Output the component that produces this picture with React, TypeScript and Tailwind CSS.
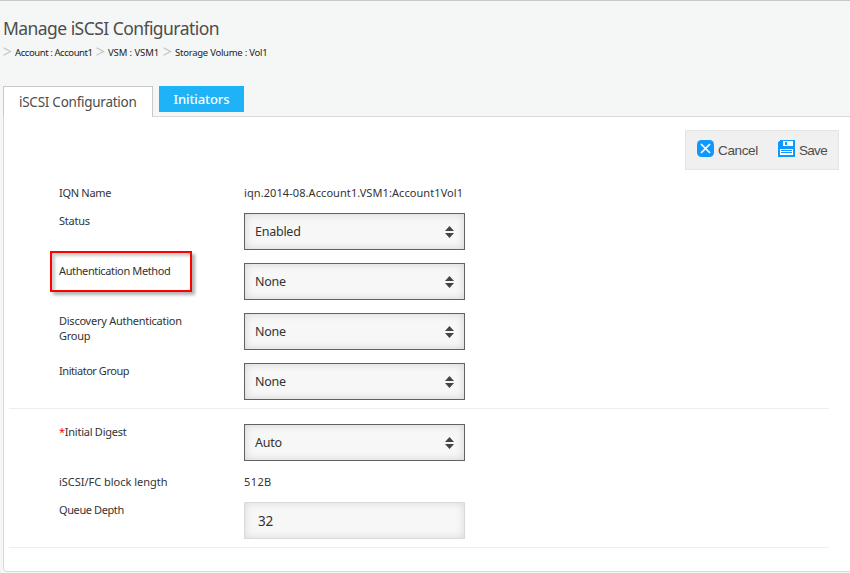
import React from "react";

function Chevron() {
  return (
    <svg width="9" height="9" viewBox="0 0 9 9" className="-mt-0.5 shrink-0" fill="none" stroke="#c4c4c4" strokeWidth="1.2">
      <path d="M0.5 0.7 L7.5 4.5 L0.5 8.3" />
    </svg>
  );
}

function Crumb({ children, className }: { children: React.ReactNode; className: string }) {
  return (
    <div className={`flex shrink-0 items-center ${className}`}>
      <Chevron />
      <span className="ml-[3px] whitespace-nowrap">{children}</span>
    </div>
  );
}

function SelectBox({ value }: { value: string }) {
  return (
    <div className="flex h-[37px] w-[221px] items-center justify-between border border-[#626163] bg-[#f7f7f7] pr-[10px] pl-[10px] text-[12.5px] tracking-[-0.25px] text-[#333] shadow-[inset_0_0_8px_rgba(0,0,0,0.15)]">
      <span>{value}</span>
      <svg width="9" height="12" viewBox="0 0 9 12" fill="#444">
        <path d="M4.5 0 L9 5 H0 Z M0 7 H9 L4.5 12 Z" />
      </svg>
    </div>
  );
}

function Row({ label, className, children }: { label: React.ReactNode; className: string; children: React.ReactNode }) {
  return (
    <div className={`flex items-start pl-[55px] ${className}`}>
      <div className="w-[185px] shrink-0 whitespace-nowrap">{label}</div>
      {children}
    </div>
  );
}

export default function App() {
  return (
    <div className="h-[573px] w-[850px] overflow-hidden border-t border-[#c9c9c9] bg-[#f5f7f6] font-['Noto_Sans',sans-serif] text-[#333]">
      <h1 className="mt-[15px] ml-[3px] h-6 text-[17.5px] leading-6 tracking-[-0.55px] whitespace-nowrap text-[#4d4d4d]">
        Manage iSCSI Configuration
      </h1>
      <nav className="mt-[5px] ml-[3px] flex h-[15px] items-center text-[9.5px] leading-[15px] tracking-[-0.25px] text-[#222]">
        <Crumb className="w-[93px] tracking-[-0.42px]">Account : Account1</Crumb>
        <Crumb className="w-[67px] tracking-[-0.1px]">VSM : VSM1</Crumb>
        <Crumb className="w-[110px]">Storage Volume : Vol1</Crumb>
      </nav>
      <div className="mt-[26px] flex h-[30px] items-start pl-[3px]">
        <div className="relative z-10 h-[31px] w-[150px] border border-b-0 border-[#c9c9c9] bg-white pl-[15px] text-[13.5px] leading-[30px] tracking-[-0.26px] whitespace-nowrap text-[#4d4d4d]">
          iSCSI Configuration
        </div>
        <div className="ml-[6px] h-[26px] w-[85px] bg-[#1eb3f6] text-center text-[13px] leading-[26px] font-medium tracking-[-0.1px] text-white">
          Initiators
        </div>
      </div>
      <main className="ml-[3px] h-[456px] w-[860px] rounded-bl-[4px] border border-[#d9d9d9] bg-white text-[11px] leading-[15px] tracking-[-0.25px]">
        <div className="mt-[13px] ml-[681px] flex h-10 w-[154px] items-start border border-[#e5e5e5] bg-[#f0f0f0] pl-[11px] font-['Liberation_Sans',Arial,sans-serif] text-[13.5px] leading-[40px] tracking-[-0.45px] text-[#4d4d4d]">
          <svg className="mt-[9px]" width="17" height="17" viewBox="0 0 17 17">
            <rect width="17" height="17" rx="4.5" fill="#0d99ff" />
            <path d="M4 4 L13 13 M13 4 L4 13" stroke="#fff" strokeWidth="1.7" />
          </svg>
          <span className="ml-1 w-[60px] tracking-[-0.35px]">Cancel</span>
          <svg className="mt-[9px]" width="17" height="17" viewBox="0 0 17 17" shapeRendering="crispEdges">
            <path d="M2 0 H17 V17 H0 V2 H1 V1 H2 Z" fill="#0d99ff" />
            <path d="M5 1 H15 V6 H5 Z M2 9 H15 V15 H2 Z" fill="#fff" />
            <path d="M7 2 H9 V5 H7 Z M3 10 H14 V11 H3 Z M3 12 H14 V13 H3 Z" fill="#0d99ff" />
          </svg>
          <span className="ml-1 tracking-[-0.7px]">Save</span>
        </div>

        <Row className="mt-[15px] h-7" label={<span className="tracking-[-0.3px]">IQN Name</span>}>
          <span className="tracking-[0.08px] whitespace-nowrap">iqn.2014-08.Account1.VSM1:Account1Vol1</span>
        </Row>
        <Row className="h-[50px]" label="Status">
          <SelectBox value="Enabled" />
        </Row>
        <div className="flex h-[50px] items-start pl-[46px]">
          <div className="-mt-3 mr-[52px] h-[41px] w-[142px] shrink-0 border-2 border-[#f00] pt-[10px] pl-[7px] tracking-[-0.38px] whitespace-nowrap shadow-[3px_3px_3px_rgba(0,0,0,0.3),inset_3px_3px_3px_rgba(0,0,0,0.2)]">
            Authentication Method
          </div>
          <SelectBox value="None" />
        </div>
        <Row className="h-[50px]" label={<>Discovery Authentication<br />Group</>}>
          <SelectBox value="None" />
        </Row>
        <Row className="h-[45px]" label={<span className="tracking-[-0.45px]">Initiator Group</span>}>
          <SelectBox value="None" />
        </Row>
        <hr className="ml-[5px] h-px w-[820px] border-0 bg-[#eee]" />
        <Row className="mt-[15px] h-[50px]" label={<><span className="text-[#f00]">*</span>Initial Digest</>}>
          <SelectBox value="Auto" />
        </Row>
        <Row className="h-7" label={<span className="tracking-[-0.02px]">iSCSI/FC block length</span>}>
          <span className="tracking-[0.4px]">512B</span>
        </Row>
        <Row className="h-[45px]" label={<span className="tracking-[-0.4px]">Queue Depth</span>}>
          <div className="flex h-[37px] w-[221px] items-center border border-[#dadada] bg-[#f7f7f7] pt-0.5 pl-[13px] text-[13.5px] shadow-[inset_0_0_8px_rgba(0,0,0,0.12)]">
            32
          </div>
        </Row>
        <hr className="ml-[5px] h-px w-[820px] border-0 bg-[#eee]" />
      </main>
    </div>
  );
}
